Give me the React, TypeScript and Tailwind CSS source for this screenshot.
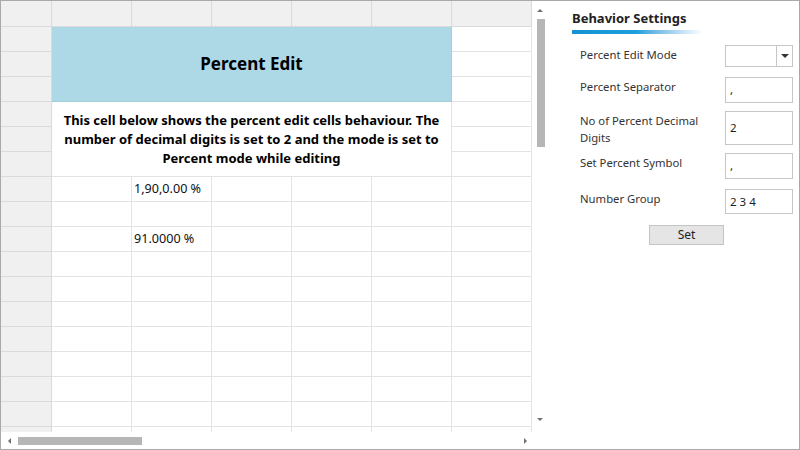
const ROWS = 17;
const COLS = 6;

// cells hidden under the two merged blocks (rows 1-6, columns 1-5)
const isCovered = (r: number, c: number) => r <= 6 && c <= 5;

const values: Record<string, string> = {
  '7-2': '1,90,0.00 %',
  '9-2': '91.0000 %',
};

const Sheet = () => {
  const cells = [];
  for (let r = 1; r <= ROWS; r++) {
    cells.push(
      <div key={`h${r}`} className="bg-[#f0f0f0] border-r border-b border-[#dadada]" />
    );
    for (let c = 1; c <= COLS; c++) {
      if (isCovered(r, c)) continue;
      const v = values[`${r}-${c}`];
      cells.push(
        <div
          key={`${r}-${c}`}
          className="border-r border-b border-[#e3e3e3] bg-white text-[12.6px] leading-[24px] pl-[2px] text-[#111] whitespace-nowrap"
        >
          {v}
        </div>
      );
    }
  }

  return (
    <div className="w-[531px] h-[431px] overflow-hidden">
      <div className="grid grid-cols-[51px_repeat(6,80px)] grid-rows-[26px] auto-rows-[25px]">
        {/* column header row */}
        <div className="bg-[#f0f0f0] border-r border-b border-[#dadada]" />
        {Array.from({ length: COLS }).map((_, i) => (
          <div key={`c${i}`} className="bg-[#f0f0f0] border-r border-b border-[#dadada]" />
        ))}

        <div className="col-start-2 col-span-5 row-start-2 row-span-3 bg-[#add8e6] border-r border-b border-[#a6cfdc] flex items-center justify-center text-[17px] font-bold text-black">
          Percent Edit
        </div>
        <div className="col-start-2 col-span-5 row-start-5 row-span-3 bg-white border-r border-b border-[#e3e3e3] flex items-start justify-center pt-[9px] px-2 text-center text-[13px] leading-[19px] font-bold text-black">
          This cell below shows the percent edit cells behaviour. The number of decimal digits is set to 2 and the mode is set to Percent mode while editing
        </div>

        {cells}
      </div>
    </div>
  );
};

const VScroll = () => (
  <div className="w-[16px] h-[431px] bg-white flex flex-col items-center">
    <div className="h-[18px] flex items-center justify-center">
      <div className="w-0 h-0 border-l-[3px] border-r-[3px] border-b-[3px] border-l-transparent border-r-transparent border-b-[#707070]" />
    </div>
    <div className="w-[8px] h-[128px] bg-[#b6b6b6] ml-[1px]" />
    <div className="flex-1" />
    <div className="h-[14px] flex items-start justify-center">
      <div className="w-0 h-0 border-l-[3px] border-r-[3px] border-t-[3px] border-l-transparent border-r-transparent border-t-[#707070]" />
    </div>
  </div>
);

const HScroll = () => (
  <div className="h-[17px] w-[547px] bg-white flex items-center">
    <div className="w-[16px] flex justify-center">
      <div className="w-0 h-0 border-t-[3px] border-b-[3px] border-r-[3px] border-t-transparent border-b-transparent border-r-[#707070]" />
    </div>
    <div className="w-[124px] h-[8px] bg-[#b6b6b6] ml-[1px]" />
    <div className="flex-1" />
    <div className="w-[16px] flex justify-center mr-[15px]">
      <div className="w-0 h-0 border-t-[3px] border-b-[3px] border-l-[3px] border-t-transparent border-b-transparent border-l-[#707070]" />
    </div>
  </div>
);

const Field = ({ label, value, h, mt }: { label: React.ReactNode; value: string; h: string; mt: string }) => (
  <div className={`flex justify-between ${mt}`}>
    <div className="pl-[8px] pt-[1px] text-[11.3px] leading-[17px] text-[#333]">{label}</div>
    <div className={`w-[68px] ${h} border border-[#c6c6c6] bg-white flex items-center pl-[4px] text-[11.5px] text-[#222]`}>
      {value}
    </div>
  </div>
);

const Panel = () => (
  <div className="flex-1 bg-white pl-[24px] pr-[6px] pt-[8px]">
    <div className="text-[13px] font-bold text-[#222] leading-[18px]">Behavior Settings</div>
    <div className="mt-[3px] w-[131px] h-[4px] bg-gradient-to-r from-[#1592d2] via-[#1ea0dc] to-white" />

    <div className="flex justify-between mt-[11px]">
      <div className="pl-[8px] pt-[1px] text-[11.3px] leading-[17px] text-[#333]">Percent Edit Mode</div>
      <div className="w-[68px] h-[22px] border border-[#c6c6c6] bg-white flex">
        <div className="flex-1" />
        <div className="w-[16px] border-l border-[#c6c6c6] flex items-center justify-center">
          <div className="w-0 h-0 border-l-[4px] border-r-[4px] border-t-[4px] border-l-transparent border-r-transparent border-t-[#333]" />
        </div>
      </div>
    </div>

    <Field label="Percent Separator" value="," h="h-[26px]" mt="mt-[10px]" />
    <Field
      label={<>No of Percent Decimal<br />Digits</>}
      value="2"
      h="h-[34px]"
      mt="mt-[8px]"
    />
    <Field label="Set Percent Symbol" value="," h="h-[26px]" mt="mt-[7px]" />
    <Field label="Number Group" value="2 3 4" h="h-[25px]" mt="mt-[10px]" />

    <div className="flex justify-center mt-[11px] pl-[8px]">
      <button className="w-[75px] h-[20px] bg-[#e5e5e5] border border-[#c4c4c4] text-[12px] leading-[18px] text-[#222]">
        Set
      </button>
    </div>
  </div>
);

export default function App() {
  return (
    <div
      className="w-[800px] h-[450px] border border-[#a9a9a9] bg-white flex overflow-hidden"
      style={{ fontFamily: '"Segoe UI", "Noto Sans", "Open Sans", sans-serif' }}
    >
      <div className="w-[547px] flex flex-col">
        <div className="flex">
          <Sheet />
          <VScroll />
        </div>
        <HScroll />
      </div>
      <Panel />
    </div>
  );
}
